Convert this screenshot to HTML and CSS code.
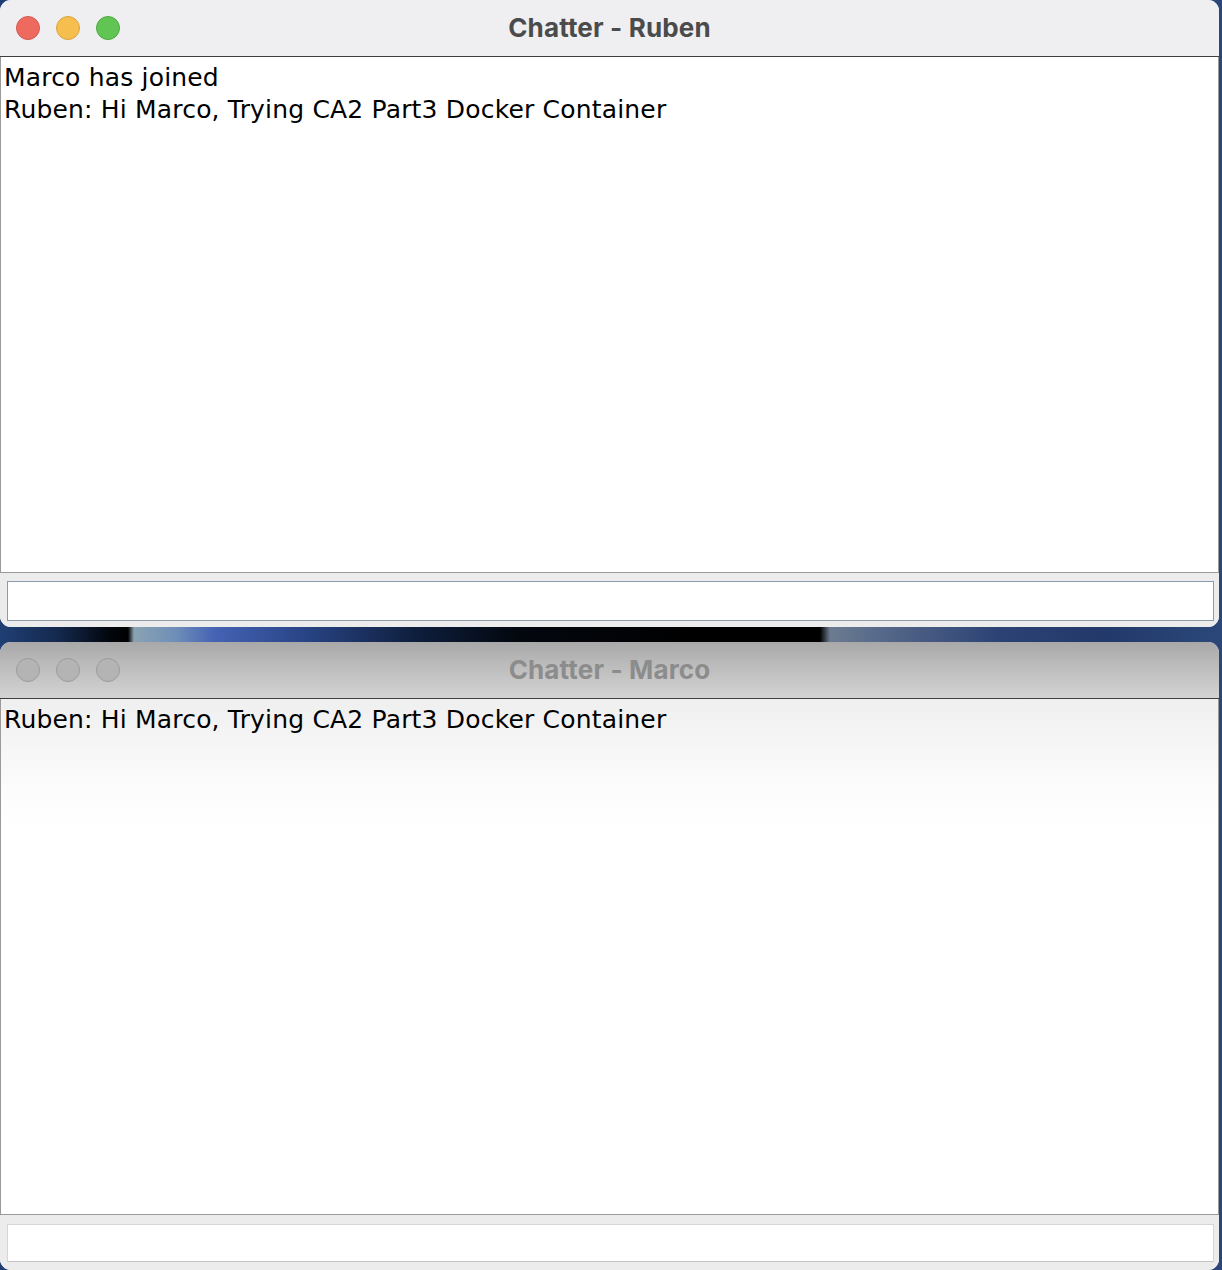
FILE: index.html
```html
<!DOCTYPE html>
<html>
<head>
<meta charset="utf-8">
<title>Chatter</title>
<link rel="stylesheet" href="styles.css">
</head>
<body>
<div class="desktop">
  <div class="window active">
    <div class="titlebar">
      <div class="lights">
        <span class="light red"></span>
        <span class="light yellow"></span>
        <span class="light green"></span>
      </div>
      <div class="title">Chatter - Ruben</div>
    </div>
    <div class="log">
      <div class="line">Marco has joined</div>
      <div class="line">Ruben: Hi Marco, Trying CA2 Part3 Docker Container</div>
    </div>
    <div class="entry">
      <div class="field"></div>
    </div>
  </div>
  <div class="window inactive">
    <div class="titlebar">
      <div class="lights">
        <span class="light"></span>
        <span class="light"></span>
        <span class="light"></span>
      </div>
      <div class="title">Chatter - Marco</div>
    </div>
    <div class="log">
      <div class="line">Ruben: Hi Marco, Trying CA2 Part3 Docker Container</div>
    </div>
    <div class="entry">
      <div class="field"></div>
    </div>
  </div>
</div>
</body>
</html>
```
FILE: styles.css
```css
html, body {
  margin: 0;
  padding: 0;
}
body {
  width: 1222px;
  height: 1270px;
  overflow: hidden;
  background:
    linear-gradient(90deg,
      #1f3f74 0px, #14284c 60px, #02060c 110px, #000 128px,
      #8aa2b2 134px, #6f8fb8 175px, #4562b4 215px, #2a4688 300px,
      #0d1d3a 420px, #03070e 520px, #000 700px, #000 820px,
      #6c7b90 830px, #56698a 880px, #2c4274 1000px, #22396a 1100px, #2b4779 1222px);
}
.desktop {
  display: flex;
  flex-direction: column;
  gap: 15px;
  width: 1219px;
}
.window {
  width: 1219px;
  border-radius: 11px;
  overflow: hidden;
  display: flex;
  flex-direction: column;
  background: #ececec;
}
.window.active {
  height: 627px;
}
.window.inactive {
  height: 628px;
}
.titlebar {
  height: 56px;
  border-bottom: 1px solid #3e3e3e;
  display: flex;
  align-items: center;
  position: relative;
  flex: none;
}
.active .titlebar {
  background: #efeff1;
}
.inactive .titlebar {
  background: linear-gradient(180deg, #a8a8a8 0%, #bdbdbd 45%, #d3d3d3 100%);
}
.lights {
  display: flex;
  gap: 16px;
  padding-left: 16px;
  margin-top: -1px;
}
.light {
  width: 24px;
  height: 24px;
  border-radius: 50%;
  box-sizing: border-box;
  background: #b4b4b4;
  border: 1px solid #9c9c9c;
}
.light.red { background: #ee6a5f; border-color: #d45a50; }
.light.yellow { background: #f5be4f; border-color: #d9a43f; }
.light.green { background: #61c554; border-color: #50a843; }
.title {
  position: absolute;
  left: 0;
  right: 0;
  top: 0;
  bottom: 2px;
  display: flex;
  align-items: center;
  justify-content: center;
  font-family: Inter, "Liberation Sans", sans-serif;
  font-weight: 700;
  font-size: 26px;
  letter-spacing: 0.15px;
}
.active .title { color: #4b4b4c; }
.inactive .title { color: #8c8c8c; }
.log {
  height: 516px;
  box-sizing: border-box;
  border-left: 1px solid #9a9a9a;
  border-right: 1px solid #9a9a9a;
  border-bottom: 1px solid #9a9a9a;
  background: #fff;
  padding: 5px 4px 0 3px;
  font-family: "DejaVu Sans", sans-serif;
  font-size: 25px;
  letter-spacing: 0.18px;
  line-height: 32px;
  color: #000;
  flex: none;
}
.inactive .log {
  background: linear-gradient(180deg, #efefef 0px, #f5f5f5 40px, #fcfcfc 90px, #fff 130px);
}
.entry {
  flex: 1;
  padding: 8px 5px 0 7px;
  background: #ececec;
}
.inactive .entry {
  padding-top: 9px;
}
.field {
  height: 40px;
  box-sizing: border-box;
  background: #fff;
  border: 1px solid #8c9aad;
  border-top-color: #8a9ab0;
}
.inactive .field {
  height: 38px;
  border: 1px solid #d6d6d6;
  border-bottom-color: #c4c4c4;
}
```
